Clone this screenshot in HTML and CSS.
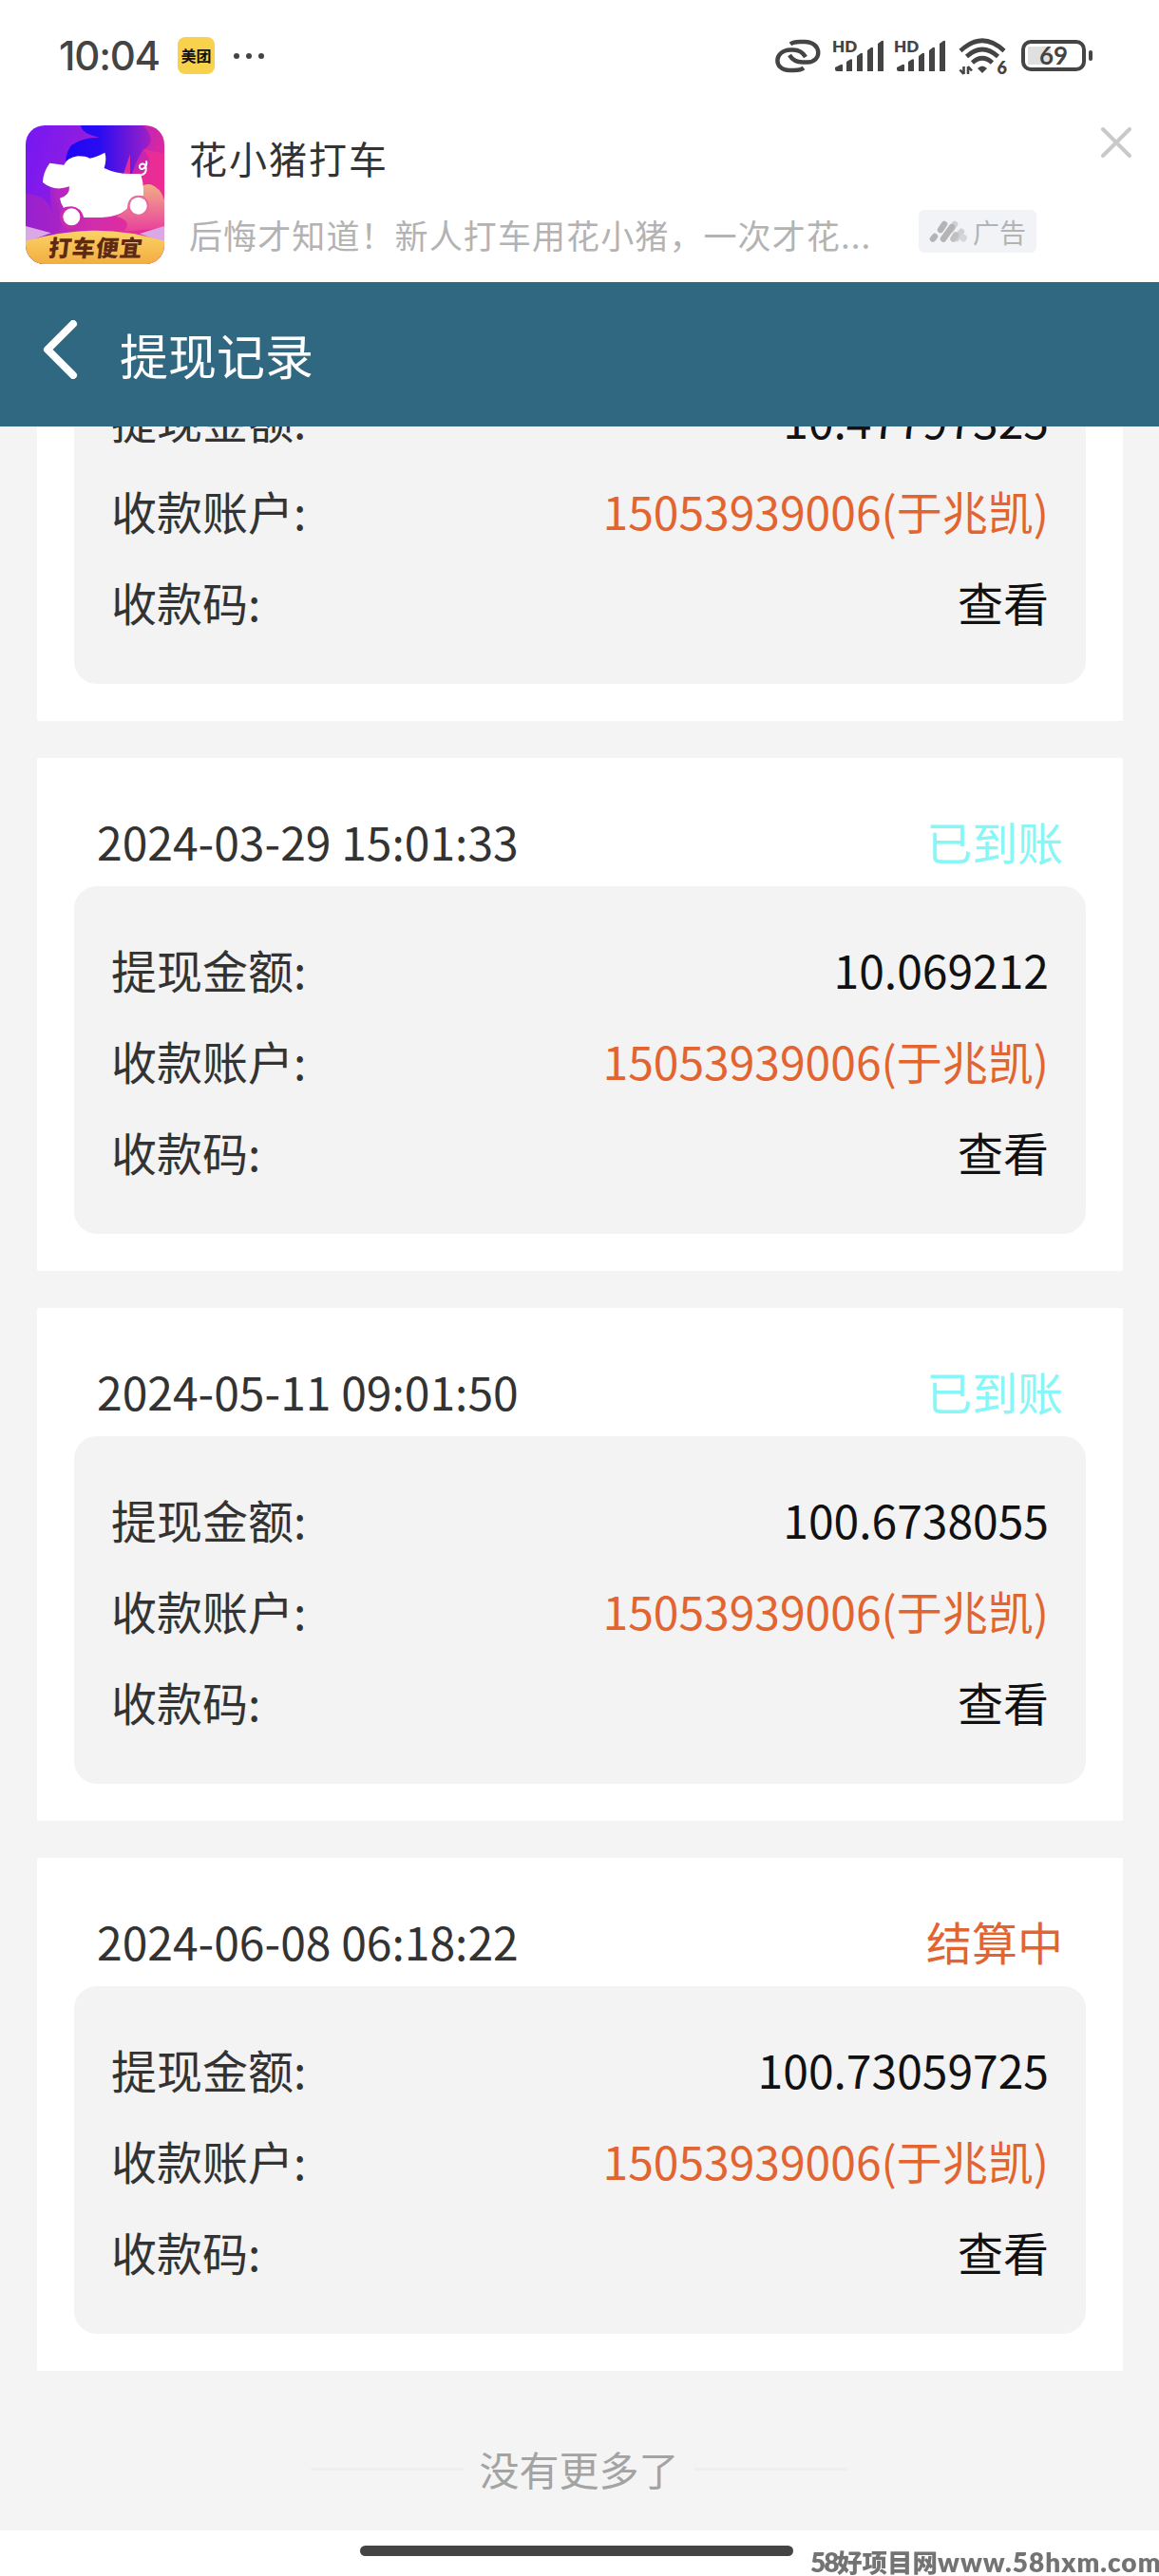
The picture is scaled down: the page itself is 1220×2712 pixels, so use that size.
FILE: index.html
```html
<!DOCTYPE html>
<html lang="zh-CN">
<head>
  <meta charset="UTF-8" />
  <meta name="viewport" content="width=device-width, initial-scale=1.0" />
  <title>提现记录</title>
  <link rel="stylesheet" href="styles.css">
</head>
<body>
  <div class="status-bar">
    <span class="clock">10:04</span>
    <span class="meituan">美团</span>
    <svg class="dots" width="32" height="8" viewBox="0 0 32 8" fill="#444">
      <circle cx="3" cy="4" r="3"/><circle cx="16" cy="4" r="3"/><circle cx="29" cy="4" r="3"/>
    </svg>
    <div class="status-icons">
      <svg class="link" width="48" height="36" viewBox="0 0 48 36" fill="none" stroke="#444" stroke-width="4.4">
        <path d="M16 5.500C19 3 22 3 26 3H31C49 3 50 24 34 24.500H29C22 24.500 18 22 15 17"/>
        <path d="M32 19C29 14 25 11.500 19 11.500H16C-2 12 -2 33 15 33H20C24 33 27 33 30 30.500"/>
      </svg>
      <svg class="signal" width="54" height="48" viewBox="0 -6 54 48" fill="#444">
        <text class="hd" x="0" y="13.500">HD</text>
        <path d="M3 30L9 27Q11 26 11 28V34H5Q3 34 3 32ZM15 24L19 21.500Q21 20.500 21 22.500V34H15ZM26 18L30 15Q32 14 32 16V34H26ZM37 12L41 9Q43 8 43 10V34H37ZM48 5L52 2Q54 1 54 3V34H48Z"/>
      </svg>
      <svg class="signal" width="54" height="48" viewBox="0 -6 54 48" fill="#444">
        <text class="hd" x="0" y="13.500">HD</text>
        <path d="M3 30L9 27Q11 26 11 28V34H5Q3 34 3 32ZM15 24L19 21.500Q21 20.500 21 22.500V34H15ZM26 18L30 15Q32 14 32 16V34H26ZM37 12L41 9Q43 8 43 10V34H37ZM48 5L52 2Q54 1 54 3V34H48Z"/>
      </svg>
      <svg class="wifi" width="52" height="52" viewBox="0 -6 52 52" fill="none" stroke="#444" stroke-width="4.600">
        <path d="M2 13.500Q25 -8 48 13.500M8.500 19.500Q25 4.500 41.500 19.500M14.500 26Q25 16.500 35.500 26"/>
        <path d="M20 32Q25 27 30 32L25 37Z" fill="#444" stroke="none"/>
        <path d="M5.500 30V38M5.500 38L1.500 33.500M10 38V30M10 30L14 34.500" stroke-width="2.600"/>
        <text class="six" x="40.500" y="38" fill="#444" stroke="none">6</text>
      </svg>
      <div class="battery"><span>69</span></div>
    </div>
  </div>

  <div class="ad">
    <svg class="ad-icon" width="146" height="146" viewBox="0 0 438 438">
      <defs>
        <linearGradient id="sky" x1="0" x2="1" y1="0" y2=".3">
          <stop offset="0" stop-color="#7417f5"/><stop offset=".4" stop-color="#8f1de0"/><stop offset=".75" stop-color="#bd22b5"/><stop offset="1" stop-color="#e02a9c"/>
        </linearGradient>
        <linearGradient id="blue" x1="0" x2="1">
          <stop offset="0" stop-color="#1c06f5"/><stop offset=".4" stop-color="#2a0cf2"/><stop offset="1" stop-color="#a020c4"/>
        </linearGradient>
        <linearGradient id="pink" x1="0" x2="1">
          <stop offset="0" stop-color="#8e20d8"/><stop offset=".45" stop-color="#d02cae"/><stop offset="1" stop-color="#ee2c92"/>
        </linearGradient>
        <linearGradient id="sun" x1="0" x2="0" y1="0" y2="1">
          <stop offset="0" stop-color="#f2ae86"/><stop offset="1" stop-color="#e8409c"/>
        </linearGradient>
        <linearGradient id="hill" x1="0" x2="0" y1="0" y2="1">
          <stop offset="0" stop-color="#fbd366"/><stop offset="1" stop-color="#f2ad42"/>
        </linearGradient>
      </defs>
      <rect width="438" height="438" fill="url(#sky)"/>
      <path d="M174 0H370Q420 50 370 78Q350 110 335 155H130Q118 95 145 62Q180 38 232 38Q176 26 174 0Z" fill="url(#blue)"/>
      <path d="M0 218Q64 215 86 278Q74 220 80 180H300L330 90V155L360 150Q420 130 370 74L438 90V438H0Z" fill="url(#pink)"/>
      <path d="M0 216Q62 216 86 280Q77 240 82 200L120 310L100 335L0 325Z" fill="#a020c8" opacity=".55"/>
      <path d="M285 288Q330 270 350 210Q370 180 395 187Q425 196 438 235V325L310 335Q340 300 285 288Z" fill="url(#sun)"/>
      <path d="M0 318L80 340L0 370ZM438 318L360 342L438 370Z" fill="#dba8e6"/>
      <path d="M0 365Q110 334 210 332Q320 330 438 365V438H0Z" fill="url(#hill)"/>
      <circle cx="145" cy="291" r="37" fill="#c92bb0"/>
      <path fill="#fff" d="M76 119L121 125Q130 103 165 97Q190 97 202 104Q222 101 250 86Q257 105 248 135Q285 153 330 153H362Q373 175 372 222Q330 218 321 262Q300 288 240 291H184Q174 258 145 256Q125 257 120 261Q110 244 108 230Q140 222 138 193Q90 210 54 180Q54 150 76 119Z"/>
      <circle cx="356" cy="255" r="34" fill="#e8699b"/>
      <circle cx="145" cy="289" r="27" fill="#fff"/>
      <circle cx="356" cy="254" r="27" fill="#fff"/>
      <path d="M352 158Q378 158 380 142C383 114 358 118 360 132C363 146 386 134 381 112" fill="none" stroke="#fff" stroke-width="6"/>
      <text class="ad-slogan" x="72" y="415" textLength="295" transform="translate(49 0) skewX(-7)">打车便宜</text>
    </svg>
    <div class="ad-text">
      <div class="ad-title">花小猪打车</div>
      <div class="ad-desc">后悔才知道！新人打车用花小猪，一次才花...</div>
    </div>
    <div class="ad-badge">
      <svg width="40" height="24" viewBox="0 0 40 24" stroke-width="6.500" stroke-linecap="round" fill="none">
        <path d="M23 10L27 4" stroke="#d0d0d2"/>
        <path d="M29 19L31 15.500L34 12" stroke="#d0d0d2"/>
        <path d="M4 19.500L6 17M12 10L16 4M15 19.500L24 7" stroke="#b4b4b6"/>
        <path d="M25.500 19.500L28 15.500" stroke="#c0c0c2"/>
        <path d="M36 19.500L37 18" stroke="#d6d6d8" stroke-width="6"/>
      </svg>
      <span>广告</span>
    </div>
    <svg class="ad-close" width="32" height="32" viewBox="0 0 32 32" stroke="#c9c9c9" stroke-width="4" stroke-linecap="round">
      <path d="M2 2L30 30M30 2L2 30"/>
    </svg>
  </div>

  <header class="nav">
    <svg width="37" height="62" viewBox="0 0 37 62" fill="none" stroke="#fff" stroke-width="8" stroke-linecap="round" stroke-linejoin="round">
      <path d="M32 4L5 31L32 58"/>
    </svg>
    <h1>提现记录</h1>
  </header>

  <!-- scrolled to the end, so the first card runs under the header -->
  <main class="list">
    <section class="card">
      <div class="card-head"></div>
      <div class="card-body">
        <div class="row"><span>提现金额:</span><span class="value">10.47797325</span></div>
        <div class="row"><span>收款账户:</span><span class="value account">15053939006(于兆凯)</span></div>
        <div class="row"><span>收款码:</span><span class="value">查看</span></div>
      </div>
    </section>

    <section class="card">
      <div class="card-head"><span>2024-03-29 15:01:33</span><span class="done">已到账</span></div>
      <div class="card-body">
        <div class="row"><span>提现金额:</span><span class="value">10.069212</span></div>
        <div class="row"><span>收款账户:</span><span class="value account">15053939006(于兆凯)</span></div>
        <div class="row"><span>收款码:</span><span class="value">查看</span></div>
      </div>
    </section>

    <section class="card">
      <div class="card-head"><span>2024-05-11 09:01:50</span><span class="done">已到账</span></div>
      <div class="card-body">
        <div class="row"><span>提现金额:</span><span class="value">100.6738055</span></div>
        <div class="row"><span>收款账户:</span><span class="value account">15053939006(于兆凯)</span></div>
        <div class="row"><span>收款码:</span><span class="value">查看</span></div>
      </div>
    </section>

    <section class="card">
      <div class="card-head"><span>2024-06-08 06:18:22</span><span class="pending">结算中</span></div>
      <div class="card-body">
        <div class="row"><span>提现金额:</span><span class="value">100.73059725</span></div>
        <div class="row"><span>收款账户:</span><span class="value account">15053939006(于兆凯)</span></div>
        <div class="row"><span>收款码:</span><span class="value">查看</span></div>
      </div>
    </section>

    <div class="no-more">没有更多了</div>
  </main>

  <div class="home-area"><div class="home-bar"></div></div>
  <div class="watermark"><span class="wm-num">58</span><span class="wm-cn">好项目网</span><span class="wm-url">www.58hxm.com</span></div>
</body>
</html>
```

FILE: styles.css
```css
:root {
  --nav: #306882;
  --page: #f4f4f4;
  --inner: #f3f3f3;
  --orange: #e26430;
  --cyan: #86f6f6;
}

* {
  box-sizing: border-box;
}

html, body {
  margin: 0;
  padding: 0;
}

body {
  display: flex;
  flex-direction: column;
  width: 1220px;
  height: 2712px;
  overflow: hidden;
  background: #fff;
  color: #333;
  font-family: "Noto Sans CJK SC", sans-serif;
}

svg {
  display: block;
  flex: none;
}

/* status bar */
.status-bar {
  display: flex;
  align-items: center;
  height: 117px;
  padding: 0 70px 0 62px;
  color: #444;
}

.clock {
  width: 125px;
  font: 500 42px/1 Inter, sans-serif;
  letter-spacing: -1.2px;
}

.meituan {
  width: 39px;
  height: 39px;
  margin-right: 20px;
  border-radius: 8px;
  background: #f8d24c;
  color: #111;
  font-size: 16px;
  font-weight: 700;
  line-height: 38px;
  text-align: center;
  white-space: nowrap;
}

.status-icons {
  display: flex;
  align-items: center;
  margin-left: auto;
}

.link {
  margin-right: 12px;
}

.signal {
  margin-right: 11px;
}

.wifi {
  margin: 2px 14px 0 3px;
}

.hd {
  font: 800 17px Lato, sans-serif;
}

.six {
  font: 800 18px Lato, sans-serif;
}

.battery {
  position: relative;
  width: 68px;
  height: 33px;
  margin-right: 7px;
  border: 4px solid #444;
  border-radius: 10px;
  background: linear-gradient(#e0e0e0, #e0e0e0) 3px 3px / 24px 19px no-repeat;
  font: 700 26px/25px Lato, sans-serif;
  text-align: center;
}

.battery::after {
  content: "";
  position: absolute;
  right: -11px;
  top: 7px;
  width: 4px;
  height: 11px;
  border-radius: 2px;
  background: #444;
}

/* ad strip */
.ad {
  display: flex;
  height: 180px;
  padding: 15px 29px 0 27px;
}

.ad-icon {
  border-radius: 20px;
}

.ad-slogan {
  font: 900 72px "Noto Sans CJK SC", sans-serif;
  fill: #5e2a12;
}

.ad-text {
  width: 768px;
  padding: 4px 0 0 26px;
  white-space: nowrap;
}

.ad-title {
  height: 60px;
  font-size: 40px;
  line-height: 60px;
  letter-spacing: 2px;
}

.ad-desc {
  margin-top: 23px;
  color: #b3b3b3;
  font-size: 35px;
  line-height: 56px;
  letter-spacing: 1.1px;
}

.ad-badge {
  display: flex;
  align-items: center;
  gap: 6px;
  width: 124px;
  height: 45px;
  margin: 89px 0 0 26px;
  padding-left: 11px;
  border-radius: 6px;
  background: #f2f3f6;
  color: #b3b3b3;
  font-size: 28px;
}

.ad-close {
  margin: 2px 0 0 auto;
}

/* title bar */
.nav {
  display: flex;
  height: 152px;
  padding: 40px 0 0 45px;
  background: var(--nav);
}

.nav h1 {
  margin: -2px 0 0 44px;
  color: #fff;
  font-size: 51px;
  font-weight: 400;
  line-height: 76px;
}

/* records */
.list {
  display: flex;
  flex-direction: column;
  justify-content: flex-end;
  gap: 39px;
  height: 2215px;
  padding: 0 38px 0 39px;
  overflow: hidden;
  background: var(--page);
  font-size: 48px;
  line-height: 96px;
}

.card {
  flex: none;
  height: 540px;
  padding: 39px;
  border-radius: 2px;
  background: #fff;
}

.card-head {
  display: flex;
  justify-content: space-between;
  height: 96px;
  padding: 0 24px;
}

.card-body {
  padding: 39px;
  border-radius: 24px;
  background: var(--inner);
}

.row {
  display: flex;
  justify-content: space-between;
}

.value {
  color: #111;
}

.account, .pending {
  color: var(--orange);
}

.done {
  color: var(--cyan);
}

.no-more {
  display: flex;
  flex: none;
  align-items: center;
  justify-content: center;
  gap: 16px;
  height: 168px;
  margin-top: -39px;
  padding: 38px 2px 0 0;
  color: #a3a3a3;
  font-size: 42px;
}

.no-more::before, .no-more::after {
  content: "";
  width: 161px;
  height: 3px;
  background: #eee;
}

/* gesture bar */
.home-area {
  height: 48px;
  padding: 16px 0 0 379px;
}

.home-bar {
  width: 456px;
  height: 11px;
  border-radius: 6px;
  background: #444;
}

.watermark {
  position: fixed;
  right: 0;
  bottom: 0;
  display: flex;
  width: 367px;
  height: 30px;
  color: #737373;
  line-height: 30px;
  white-space: nowrap;
}

.wm-num, .wm-url {
  font-family: Lato, sans-serif;
  font-weight: 800;
  font-size: 28px;
}

.wm-num {
  width: 28px;
  letter-spacing: -2px;
}

.wm-cn {
  width: 106px;
  font-size: 26.5px;
  font-weight: 900;
}

.wm-url {
  letter-spacing: 1px;
}
```
